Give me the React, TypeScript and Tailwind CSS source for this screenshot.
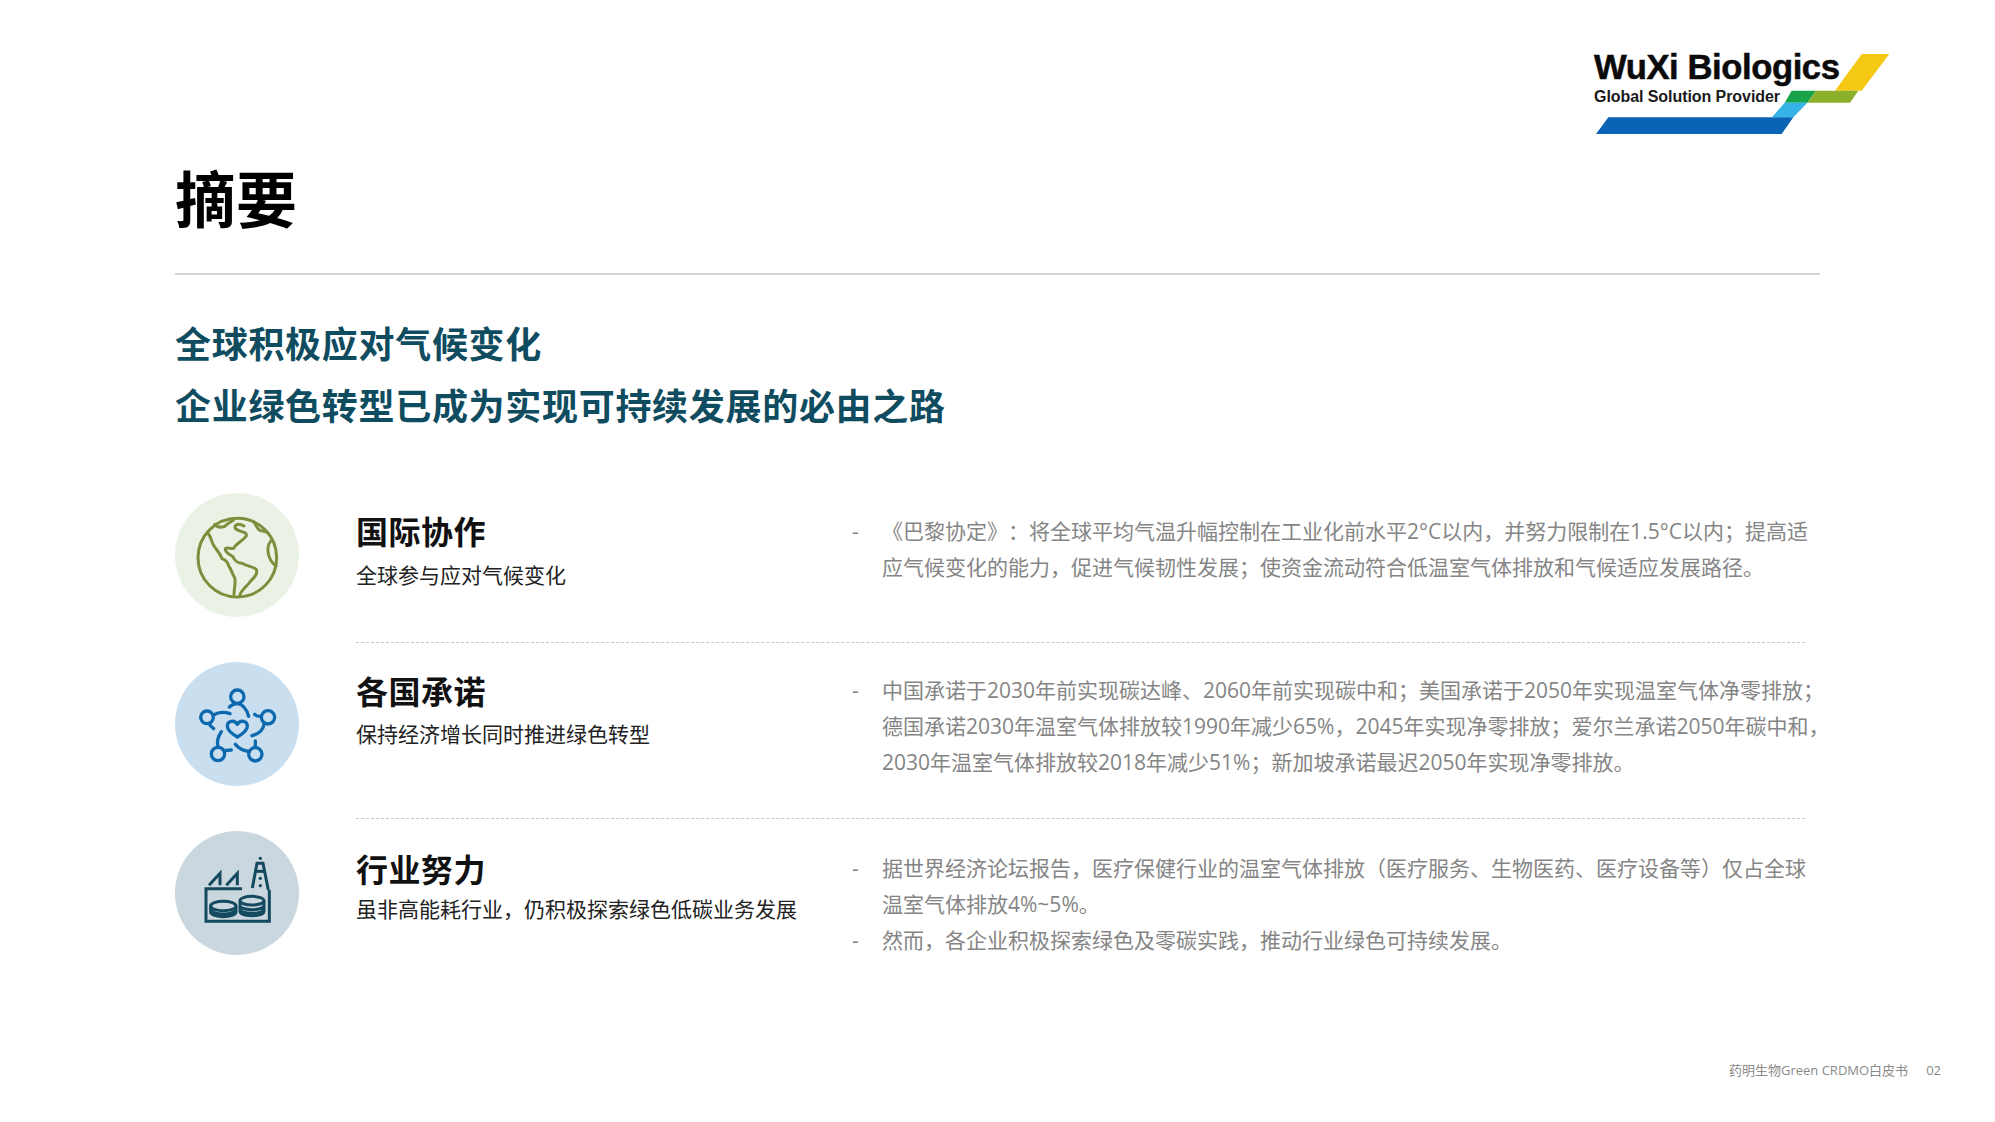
const cjk = "font-['Noto_Sans_CJK_SC','Noto_Sans',sans-serif]";
const mixed = "font-['Open_Sans','Noto_Sans_CJK_SC',sans-serif] [text-spacing-trim:space-all]";

function Logo() {
  return (
    <svg viewBox="0 0 1050 360" className="w-[350px] h-[120px]">
      <polygon points="905,72 988,72 905,182 825,182" fill="#f5c814" />
      <polygon points="695,182 768,182 742,218 674,218" fill="#17a34a" />
      <polygon points="768,182 895,182 870,218 742,218" fill="#8cb02c" />
      <polygon points="674,218 742,218 700,262 636,262" fill="#35b2e6" />
      <polygon points="145,262 700,262 665,312 108,312" fill="#0a63b4" />
      <text x="102" y="146" fontFamily="Liberation Sans" fontWeight="700" fontSize="104" letterSpacing="-1.3" stroke="#0a0a0a" strokeWidth="1.5" fill="#0a0a0a">
        WuXi Biologics
      </text>
      <text x="102" y="216" fontFamily="Liberation Sans" fontWeight="700" fontSize="48" letterSpacing="-0.2" fill="#1a1a1a">
        Global Solution Provider
      </text>
    </svg>
  );
}

function GlobeIcon() {
  return (
    <svg viewBox="7 -3 420 420" className="w-[140px] h-[140px] shrink-0" fill="none" stroke="#7d8f3c" strokeWidth="9" strokeLinejoin="round" strokeLinecap="round">
      <circle cx="218" cy="215" r="118" />
      <path d="M128 140c12 10 10 25 20 40 10 15 20 25 24 38 13 4 18 14 20 22 8 10 10 22 18 35 4 15-2 35-2 50" />
      <path d="M226 326c6-16 22-26 32-41 10-10 22-20 17-35-13-10-30-10-43-18-10 0-22-7-27-20-9-7-25-12-23-24 8-6 18 4 26-2 7-16 27-21 37-36 3-15-20-10-33-22-4-13 10-18 26-8" />
      <path d="M150 115c6 8 18 10 30 6 8-8 16-12 26-18" />
      <path d="M268 108c8 12 8 20 18 25 8 4 18 2 24 8" />
      <path d="M318 165c-10 14-10 28-6 42 3 12 10 24 22 33" />
    </svg>
  );
}

function PeopleIcon() {
  return (
    <svg viewBox="7 -3 420 420" className="w-[140px] h-[140px] shrink-0" fill="none" stroke="#0c69ae" strokeWidth="10" strokeLinejoin="round" strokeLinecap="round">
      <circle cx="218" cy="125" r="20" />
      <circle cx="127" cy="187" r="19" />
      <circle cx="310" cy="187" r="20" />
      <circle cx="160" cy="297" r="20" />
      <circle cx="272" cy="298" r="20" />
      <path d="M194 156c8-8 16-10 24-10 14 0 30 18 34 38" />
      <path d="M146 180c14-8 32-10 50-4" />
      <path d="M133 205c2 6 8 12 14 16" />
      <path d="M288 184c-6 0-14-2-18-6" />
      <path d="M298 208c-2 16-16 28-36 34" />
      <path d="M170 230c-10 14-14 30-10 46" />
      <path d="M178 287l22-2" />
      <path d="M212 268c12 14 30 20 42 22" />
      <path d="M272 258v18" />
      <path d="M218 246c-14-8-30-20-30-32 0-18 22-20 30-6 8-14 30-12 30 6 0 12-16 24-30 32z" />
    </svg>
  );
}

function FactoryIcon() {
  return (
    <svg viewBox="7 -3 420 420" className="w-[140px] h-[140px] shrink-0" fill="none" stroke="#134a60" strokeWidth="9" strokeLinejoin="miter">
      <path d="M133 184l33-36v36M185 184l33-36v36" />
      <path d="M232 194H124v98h190V198" />
      <path d="M263 192l14-74h18l16 80" />
      <path d="M272 142h28" />
      <circle cx="287" cy="103" r="5" fill="#134a60" stroke="none" />
      <circle cx="287" cy="163" r="5" fill="#134a60" stroke="none" />
      <circle cx="287" cy="185" r="5" fill="#134a60" stroke="none" />
      <ellipse cx="176" cy="246" rx="38" ry="14" />
      <path d="M138 246v18c0 8 18 14 38 14s38-6 38-14v-18M138 256c0 8 18 14 38 14s38-6 38-14" />
      <ellipse cx="262" cy="230" rx="36" ry="13" />
      <path d="M226 230v32c0 8 16 13 36 13s36-5 36-13v-32M226 244c0 8 16 13 36 13s36-5 36-13M226 255c0 8 16 13 36 13s36-5 36-13" />
    </svg>
  );
}

const rows = [
  {
    icon: <GlobeIcon />,
    bg: 'bg-[#eaf2e6]',
    title: '国际协作',
    sub: '全球参与应对气候变化',
    rowCls: 'pb-[26px]',
    titleCls: 'pt-[13px]',
    subCls: 'mt-[4px]',
    bodyCls: 'pt-[20px]',
    items: [['《巴黎协定》：将全球平均气温升幅控制在工业化前水平2°C以内，并努力限制在1.5°C以内；提高适', '应气候变化的能力，促进气候韧性发展；使资金流动符合低温室气体排放和气候适应发展路径。']],
  },
  {
    icon: <PeopleIcon />,
    bg: 'bg-[#c9deef]',
    title: '各国承诺',
    sub: '保持经济增长同时推进绿色转型',
    rowCls: 'pt-[19px] pb-[33px]',
    titleCls: 'pt-[4px]',
    subCls: 'mt-[3px]',
    bodyCls: 'pt-[10px]',
    items: [['中国承诺于2030年前实现碳达峰、2060年前实现碳中和；美国承诺于2050年实现温室气体净零排放；', '德国承诺2030年温室气体排放较1990年减少65%，2045年实现净零排放；爱尔兰承诺2050年碳中和，', '2030年温室气体排放较2018年减少51%；新加坡承诺最迟2050年实现净零排放。']],
  },
  {
    icon: <FactoryIcon />,
    bg: 'bg-[#cbd7de]',
    title: '行业努力',
    sub: '虽非高能耗行业，仍积极探索绿色低碳业务发展',
    rowCls: 'pt-[12px]',
    titleCls: 'pt-[13px]',
    subCls: 'mt-0',
    bodyCls: 'pt-[19px]',
    items: [['据世界经济论坛报告，医疗保健行业的温室气体排放（医疗服务、生物医药、医疗设备等）仅占全球', '温室气体排放4%~5%。'], ['然而，各企业积极探索绿色及零碳实践，推动行业绿色可持续发展。']],
  },
];

export default function App() {
  return (
    <div className={`relative w-[1995px] h-[1122px] bg-white overflow-hidden ${cjk}`}>
      <div className="flex justify-end pt-[30px] pr-[85px] h-[152px]">
        <Logo />
      </div>
      <div className="pl-[175px] w-[1820px]">
        <h1 className="text-[61px] leading-[90px] font-bold text-black">摘要</h1>
        <div className="mt-[31px] border-t-2 border-[#d4d4d4]" />
        <div className="mt-[36px] text-[36px] leading-[62px] font-bold text-[#0f4c5f] tracking-[0.7px]">
          <div>全球积极应对气候变化</div>
          <div>企业绿色转型已成为实现可持续发展的必由之路</div>
        </div>
        <div className="mt-[58px]">
          {rows.map((r, i) => (
            <div key={i} className={`flex ${r.rowCls} relative`}>
              <div className={`w-[124px] h-[124px] rounded-full shrink-0 flex items-center justify-center ${r.bg}`}>
                {r.icon}
              </div>
              <div className={`ml-[57px] w-[496px] shrink-0 ${r.titleCls}`}>
                <div className="text-[32px] leading-[48px] font-bold text-[#111] tracking-[0.5px]">{r.title}</div>
                <div className={`text-[21px] leading-[32px] text-[#222] ${r.subCls} whitespace-nowrap`}>{r.sub}</div>
              </div>
              <div className={`${r.bodyCls} text-[21px] leading-[36px] text-[#858585] whitespace-nowrap ${mixed}`}>
                {r.items.map((lines, j) => (
                  <div key={j} className="flex">
                    <span className="w-[30px] shrink-0">-</span>
                    <div>
                      {lines.map((l, k) => (
                        <div key={k}>{l}</div>
                      ))}
                    </div>
                  </div>
                ))}
              </div>
              {i < 2 && <div className="absolute bottom-0 left-[181px] w-[1449px] border-t border-dashed border-[#c8c8c8]" />}
            </div>
          ))}
        </div>
      </div>
      <div className={`absolute right-[54px] top-[1060px] flex gap-[18px] text-[13px] leading-[20px] text-[#8a8a8a] ${mixed}`}>
        <span>药明生物Green CRDMO白皮书</span>
        <span>02</span>
      </div>
    </div>
  );
}
